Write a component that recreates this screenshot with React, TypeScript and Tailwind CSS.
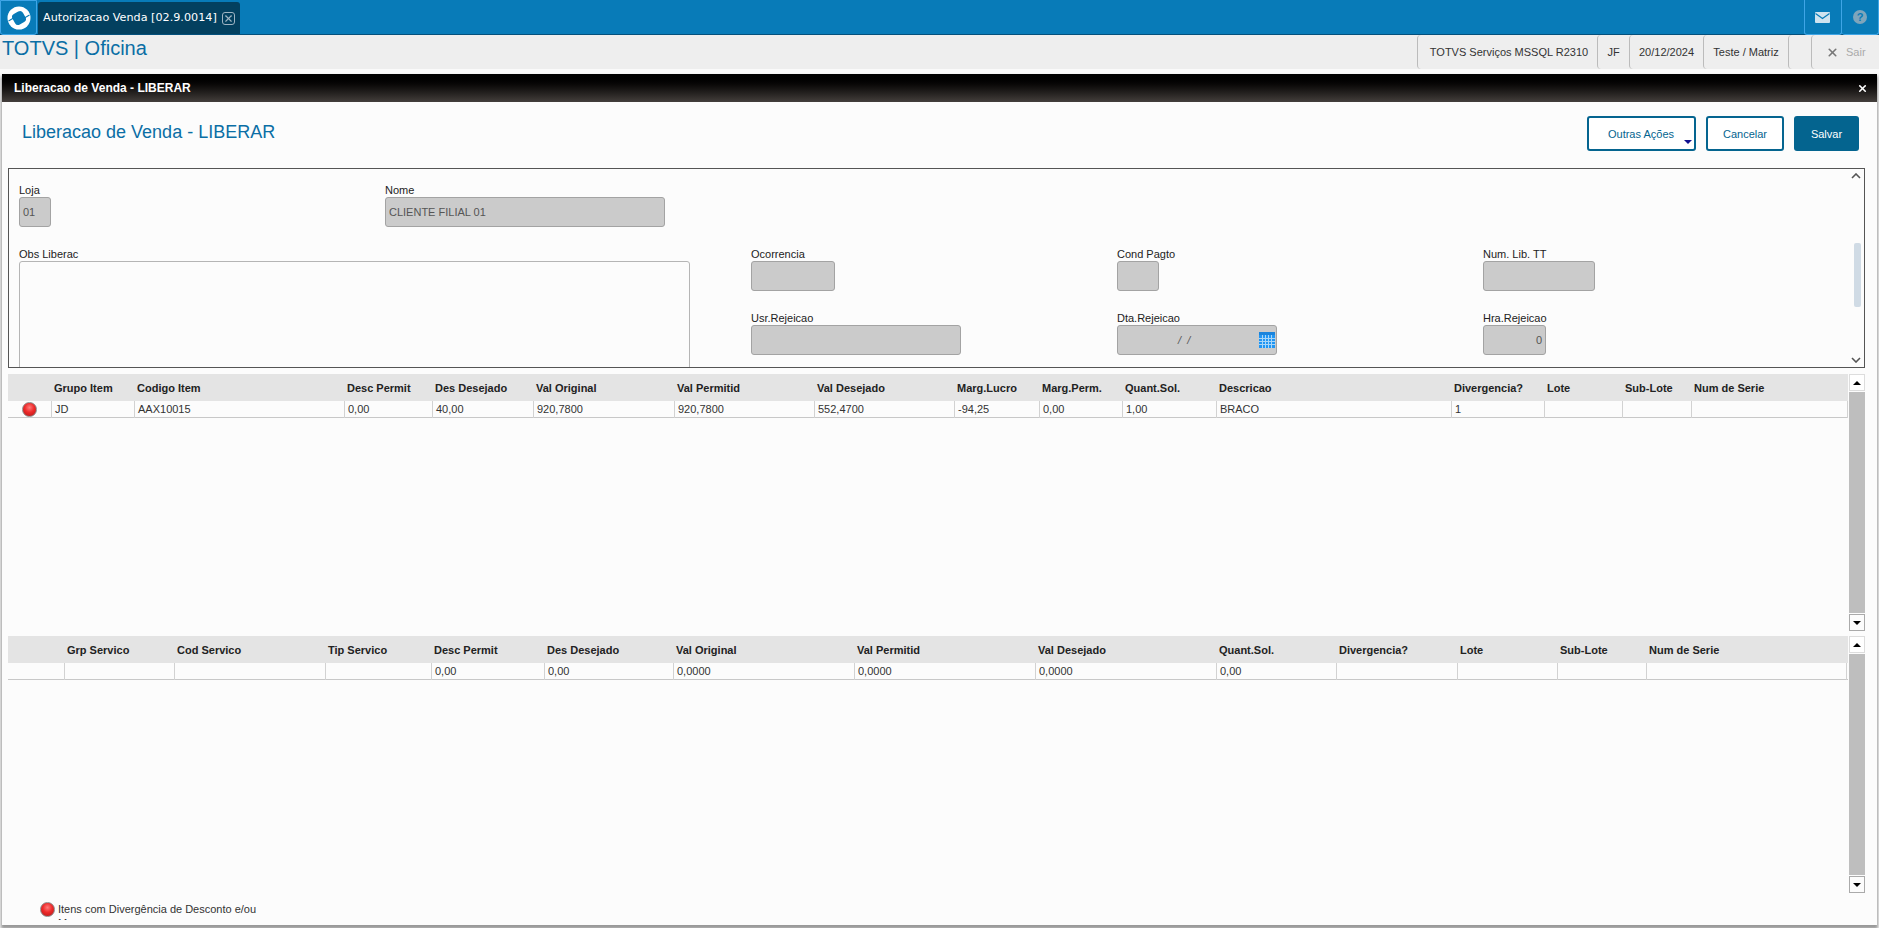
import { X } from "lucide-react";

const font = "font-['Liberation_Sans',Arial,sans-serif]";

const grid1Cols = "grid grid-cols-[43px_83px_210px_88px_101px_141px_140px_140px_85px_83px_94px_235px_93px_78px_69px_157px]";
const grid2Cols = "grid grid-cols-[56px_110px_151px_106px_113px_129px_181px_181px_181px_120px_121px_100px_89px_201px]";

const grid1Head = ["", "Grupo Item", "Codigo Item", "Desc Permit", "Des Desejado", "Val Original", "Val Permitid", "Val Desejado", "Marg.Lucro", "Marg.Perm.", "Quant.Sol.", "Descricao", "Divergencia?", "Lote", "Sub-Lote", "Num de Serie"];
const grid1Row = ["", "JD", "AAX10015", "0,00", "40,00", "920,7800", "920,7800", "552,4700", "-94,25", "0,00", "1,00", "BRACO", "1", "", "", ""];

const grid2Head = ["", "Grp Servico", "Cod Servico", "Tip Servico", "Desc Permit", "Des Desejado", "Val Original", "Val Permitid", "Val Desejado", "Quant.Sol.", "Divergencia?", "Lote", "Sub-Lote", "Num de Serie"];
const grid2Row = ["", "", "", "", "0,00", "0,00", "0,0000", "0,0000", "0,0000", "0,00", "", "", "", ""];

function RedBall({ className }: { className: string }) {
  return (
    <span className={`block rounded-full border border-[#8a8a8a] bg-[radial-gradient(circle_at_50%_35%,#ff7a7a_0%,#ee2a2a_45%,#b01818_100%)] ${className}`}></span>
  );
}

function Field({ label, value, className, align }: any) {
  return (
    <div className={className}>
      <div className="h-[14px] text-[11px] leading-[14px] text-[#222] whitespace-nowrap">{label}</div>
      <div className={`h-[30px] rounded-[3px] border border-[#a3a3a3] bg-[#cbcbcb] px-[3px] flex items-center text-[11px] text-[#555] ${align || ""}`}>
        {value}
      </div>
    </div>
  );
}

function ScrollBar() {
  return (
    <div className="w-[16px] flex flex-col shrink-0">
      <div className="h-[17px] bg-white border border-[#ddd] flex items-center justify-center">
        <span className="border-x-[4px] border-x-transparent border-b-[4px] border-b-black"></span>
      </div>
      <div className="flex-1 bg-[#bebebe] my-[1px]"></div>
      <div className="h-[17px] bg-[#fcfcfc] border border-[#aaa] flex items-center justify-center">
        <span className="border-x-[4px] border-x-transparent border-t-[4px] border-t-black"></span>
      </div>
    </div>
  );
}

function DataGrid({ cols, head, row, ball }: any) {
  return (
    <div className="flex-1 min-w-0">
      <div className={`${cols} h-[27px] bg-[#e4e4e4]`}>
        {head.map((h: string, i: number) => (
          <div key={i} className="pl-[3px] pt-[1px] flex items-center text-[11px] font-bold text-[#222] whitespace-nowrap">{h}</div>
        ))}
      </div>
      <div className={`${cols} h-[17px] border-b border-[#c8c8c8]`}>
        {row.map((c: string, i: number) => (
          <div key={i} className={`pl-[3px] flex items-center text-[11px] text-[#333] whitespace-nowrap ${i > 0 ? "border-l border-[#d2d2d2]" : ""} ${i === row.length - 1 ? "border-r" : ""}`}>
            {i === 0 && ball ? <RedBall className="w-[15px] h-[15px] ml-[11px] shrink-0" /> : c}
          </div>
        ))}
      </div>
    </div>
  );
}

function CalendarIcon() {
  return (
    <svg width="16" height="16" viewBox="0 0 16 16" className="absolute right-[2px] top-[7px]">
      <rect width="16" height="16" fill="#2196f3" />
      <rect y="0" width="16" height="3" fill="#1a84dc" />
      <path d="M0 6.5H16M0 9.5H16M0 12.5H16M3.5 3V16M6.5 3V16M9.5 3V16M12.5 3V16" stroke="#a8d6f8" strokeWidth="1" />
    </svg>
  );
}

export default function App() {
  return (
    <div className={`w-[1879px] h-[928px] overflow-hidden bg-[#fafafa] flex flex-col ${font}`}>
      {/* top blue bar */}
      <div className="h-[35px] shrink-0 bg-[#087bb8] border-b border-[#04507c] flex items-stretch relative">
        <div className="w-[37px] h-[35px] bg-[#087bb8] border border-[#3fa5e6] rounded-b-[3px] flex items-center justify-center shrink-0">
          <svg width="24" height="24" viewBox="0 0 24 24">
            <circle cx="12" cy="12" r="11.5" fill="#fff" />
            <rect x="6" y="6" width="12" height="12" rx="3.5" fill="#087bb8" transform="rotate(-30 12 12)" />
            <path d="M1.5 15L7 11.8M17 12.2L22.5 9" stroke="#087bb8" strokeWidth="1.1" />
          </svg>
        </div>
        <div className="ml-[1px] mt-[2px] w-[202px] h-[32px] bg-[#03405f] rounded-t-[3px] flex items-center pl-[5px] gap-[5px] text-white whitespace-nowrap">
          <span className="font-['DejaVu_Sans',sans-serif] text-[11.2px]">Autorizacao Venda [02.9.0014]</span>
          <span className="w-[13px] h-[13px] rounded-[3px] border border-[#9fb4c2] flex items-center justify-center">
            <X size={11} strokeWidth={2.5} className="text-[#9fb4c2]" />
          </span>
        </div>
        <div className="ml-auto flex h-[35px]">
          <div className="w-[38px] border-x border-b border-[#3fa5e6] rounded-b-[3px] flex items-center justify-center pr-[2px]">
            <svg width="15" height="11" viewBox="0 0 15 11">
              <rect width="15" height="11" rx="1" fill="#cfe3ef" />
              <path d="M0.5 1.5L7.5 6.5L14.5 1.5" fill="none" stroke="#087bb8" strokeWidth="1.2" />
            </svg>
          </div>
          <div className="w-[37px] border-r border-b border-[#3fa5e6] rounded-b-[3px] flex items-center justify-center">
            <span className="w-[14px] h-[14px] rounded-full bg-[#7fa5bb] flex items-center justify-center text-[11px] font-bold leading-none text-[#087bb8]">?</span>
          </div>
        </div>
      </div>

      {/* menu row */}
      <div className="h-[34px] shrink-0 bg-[#eeeeee] flex items-stretch">
        <div className="pl-[2px] pt-[1px] text-[20px] leading-[24px] text-[#0b6ea5]">TOTVS | Oficina</div>
        <div className="ml-auto flex text-[11px] text-[#333] whitespace-nowrap">
          <div className="w-[180px] border-l border-[#bbb] rounded-l-[4px] flex items-center justify-center pl-[3px]">TOTVS Serviços MSSQL R2310</div>
          <div className="w-[32px] border-l border-[#bbb] rounded-l-[4px] flex items-center justify-center">JF</div>
          <div className="w-[74px] border-l border-[#bbb] rounded-l-[4px] flex items-center justify-center">20/12/2024</div>
          <div className="w-[85px] border-l border-[#bbb] rounded-l-[4px] flex items-center justify-center">Teste / Matriz</div>
          <div className="w-[23px] border-l border-[#bbb] rounded-l-[4px]"></div>
          <div className="w-[68px] border-l border-[#bbb] rounded-l-[4px] flex items-center pl-[14px] gap-[7px] text-[#aaa]">
            <X size={13} strokeWidth={3} className="text-[#777]" />
            Sair
          </div>
        </div>
      </div>

      {/* modal */}
      <div className="mt-[5px] h-[851px] mx-[2px] flex flex-col shadow-[0_3px_3px_1px_#999] bg-[#fcfcfc]">
        <div className="h-[28px] shrink-0 bg-gradient-to-b from-black to-[#443f3c] flex items-center justify-between pl-[12px] pr-[9px] text-white text-[12px] font-bold">
          <span>Liberacao de Venda - LIBERAR</span>
          <X size={11} strokeWidth={3.5} />
        </div>

        <div className="flex-1 min-h-0 flex flex-col pl-[6px] pr-[12px]">
          {/* heading and actions */}
          <div className="h-[66px] shrink-0 flex items-start">
            <h1 className="ml-[14px] mt-[19px] text-[18px] leading-[22px] text-[#0b6ea5]">Liberacao de Venda - LIBERAR</h1>
            <div className="ml-auto mr-[6px] mt-[14px] flex gap-[10px] text-[11px]">
              <button className="relative w-[109px] h-[35px] rounded-[3px] border-2 border-[#04648f] text-[#04648f] bg-white pr-[1px] pt-[2px]">
                Outras Ações
                <span className="absolute right-[2px] bottom-[5px] border-x-[4px] border-x-transparent border-t-[4px] border-t-[#101090]"></span>
              </button>
              <button className="w-[78px] h-[35px] rounded-[3px] border-2 border-[#04648f] text-[#04648f] bg-white pt-[2px]">Cancelar</button>
              <button className="w-[65px] h-[35px] rounded-[3px] bg-[#04648f] text-white pt-[2px]">Salvar</button>
            </div>
          </div>

          {/* form panel */}
          <div className="relative h-[200px] shrink-0 border border-[#555] overflow-hidden pl-[10px] pt-[14px]">
            <div className="flex">
              <Field label="Loja" value="01" className="w-[32px]" />
              <Field label="Nome" value="CLIENTE FILIAL 01" className="ml-[334px] w-[280px]" />
            </div>
            <div className="flex mt-[20px]">
              <div className="w-[671px]">
                <div className="h-[14px] text-[11px] leading-[14px] text-[#222]">Obs Liberac</div>
                <div className="h-[120px] rounded-[3px] border border-[#b5b5b5] bg-[#fcfcfc]"></div>
              </div>
              <div className="ml-[61px] w-[210px]">
                <Field label="Ocorrencia" className="w-[84px]" />
                <Field label="Usr.Rejeicao" className="mt-[20px]" />
              </div>
              <div className="ml-[156px] w-[160px]">
                <Field label="Cond Pagto" className="w-[42px]" />
                <div className="mt-[20px] relative">
                  <Field label="Dta.Rejeicao" value={<span className="ml-[57px] italic">/&nbsp;&nbsp;/</span>} />
                  <div className="absolute top-[14px] right-0 w-[18px] h-[30px]"><CalendarIcon /></div>
                </div>
              </div>
              <div className="ml-[206px] w-[112px]">
                <Field label="Num. Lib. TT" />
                <Field label="Hra.Rejeicao" value="0" className="mt-[20px] w-[63px]" align="justify-end" />
              </div>
            </div>
            {/* panel scrollbar */}
            <svg width="10" height="6" viewBox="0 0 10 6" className="absolute right-[3px] top-[4px]">
              <path d="M1 5L5 1L9 5" fill="none" stroke="#555" strokeWidth="1.6" />
            </svg>
            <div className="absolute right-[3px] top-[74px] w-[7px] h-[64px] rounded-[2px] bg-[#d0dbe5]"></div>
            <svg width="10" height="6" viewBox="0 0 10 6" className="absolute right-[3px] bottom-[4px]">
              <path d="M1 1L5 5L9 1" fill="none" stroke="#555" strokeWidth="1.6" />
            </svg>
          </div>

          {/* first grid */}
          <div className="flex h-[257px] mt-[6px] shrink-0 gap-[1px]">
            <DataGrid cols={grid1Cols} head={grid1Head} row={grid1Row} ball />
            <ScrollBar />
          </div>

          {/* second grid */}
          <div className="flex h-[257px] mt-[5px] shrink-0 gap-[1px]">
            <DataGrid cols={grid2Cols} head={grid2Head} row={grid2Row} />
            <ScrollBar />
          </div>

          {/* legend, second line is cut by the box as in the original */}
          <div className="mt-[9px] ml-[32px] flex items-start gap-[3px] h-[18px] overflow-hidden">
            <RedBall className="w-[15px] h-[15px] shrink-0" />
            <div className="w-[204px] text-[11px] leading-[14px] text-[#333]">Itens com Divergência de Desconto e/ou Margem</div>
          </div>
        </div>
      </div>
    </div>
  );
}
